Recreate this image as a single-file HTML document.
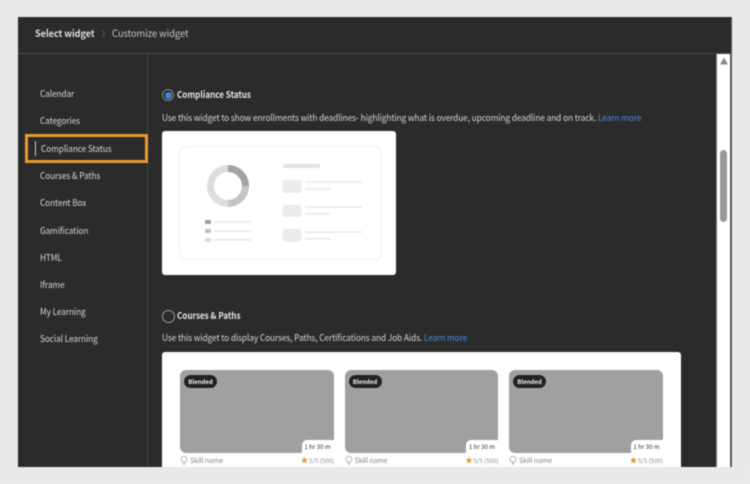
<!DOCTYPE html>
<html lang="en">
<head>
<meta charset="utf-8">
<title>Select widget</title>
<style>
html,body{margin:0;padding:0;width:750px;height:484px;overflow:hidden;background:#e9e9e9}
body{font-family:"Noto Sans CJK JP","Liberation Sans",sans-serif;position:relative}
.a{position:absolute;white-space:nowrap;line-height:1;transform-origin:0 50%}
#win{position:absolute;left:18px;top:17px;width:698px;height:450px;background:#2b2b2b}
#wrap{position:absolute;left:0;top:0;width:750px;height:484px;filter:blur(.45px)}
.nav{left:40.2px;font-size:9.2px;color:#d6d6d6;letter-spacing:-.1px;transform:scaleX(.9)}
.d{left:162px;font-size:9.2px;color:#d4d4d4;letter-spacing:-.12px;transform:scaleX(.909)}
.t{left:176.5px;font-size:9.2px;font-weight:700;color:#e2e2e2;letter-spacing:-.05px;transform:scaleX(.887)}
.lm{color:#4f88da}
.b{position:absolute;background:#ededed;border-radius:1px}
.l{position:absolute;background:#ececec;height:2px}
.img{position:absolute;top:370px;width:153.5px;height:83px;background:#a0a0a0;border-radius:6px}
.bl{position:absolute;left:4px;top:5px;width:33px;height:13px;border-radius:7px;background:#222;color:#eee;font-size:6px;font-weight:700;line-height:13px;text-align:center}
.tm{position:absolute;right:0;bottom:0;width:32px;height:13px;background:#fff;border-radius:5px 0 5px 0;color:#333;font-size:6.2px;line-height:14px;text-align:center}
.sk{top:457.8px;font-size:7.2px;color:#8a8a8a;letter-spacing:-.2px}
.rt{top:458px;font-size:6.2px;color:#8f8f8f}
.st{top:456.5px;font-size:8px;color:#e0983a}
</style>
</head>
<body>
<div id="wrap">
<div id="win"></div>
<div style="position:absolute;left:717px;top:53px;width:13px;height:414px;background:#fff"></div>
<div style="position:absolute;left:716px;top:53px;width:1px;height:414px;background:#777"></div>
<div style="position:absolute;left:730px;top:17px;width:1.5px;height:450px;background:#555"></div>
<div style="position:absolute;left:716px;top:17px;width:15px;height:36px;background:#2b2b2b"></div>
<div style="position:absolute;left:18px;top:53px;width:713px;height:1px;background:#4a4a4a"></div>
<div style="position:absolute;left:147px;top:53px;width:1px;height:414px;background:#454545"></div>

<svg style="position:absolute;left:719px;top:57px" width="10" height="8"><path d="M1 7.5L5 .5L9 7.5Z" fill="#888"/></svg>
<div style="position:absolute;left:720px;top:150px;width:7px;height:72px;background:#999;border-radius:4px"></div>

<div class="a" style="left:35.2px;top:28px;font-size:10px;font-weight:700;color:#dcdcdc;letter-spacing:-.1px;transform:scaleX(.914)">Select widget</div>
<svg style="position:absolute;left:101px;top:30px" width="5" height="7" viewBox="0 0 5 7"><path d="M1 .8L4 3.500L1 6.200" fill="none" stroke="#666" stroke-width=".8"/></svg>
<div class="a" style="left:112px;top:28px;font-size:10px;color:#c4c4c4;letter-spacing:-.1px;transform:scaleX(.945)">Customize widget</div>

<div class="a nav" style="top:89px">Calendar</div>
<div class="a nav" style="top:116px">Categories</div>
<div style="position:absolute;left:25px;top:134px;width:117px;height:23px;border:3px solid #ea9a2e"></div>
<div style="position:absolute;left:35px;top:141px;width:1px;height:15px;background:#ccc"></div>
<div class="a nav" style="top:144px;left:41px">Compliance Status</div>
<div class="a nav" style="top:171px">Courses &amp; Paths</div>
<div class="a nav" style="top:198px">Content Box</div>
<div class="a nav" style="top:225.500px">Gamification</div>
<div class="a nav" style="top:252.500px">HTML</div>
<div class="a nav" style="top:280px">Iframe</div>
<div class="a nav" style="top:307px">My Learning</div>
<div class="a nav" style="top:334px">Social Learning</div>

<div style="position:absolute;left:162px;top:89px;width:10px;height:10px;border:1px solid #888;border-radius:50%"></div>
<div style="position:absolute;left:164.500px;top:91.500px;width:7px;height:7px;background:#3d86dc;border-radius:50%"></div>
<div class="a t" style="top:89.500px">Compliance Status</div>
<div class="a d" style="top:113px">Use this widget to show enrollments with deadlines- highlighting what is overdue, upcoming deadline and on track. <span class="lm">Learn more</span></div>

<div style="position:absolute;left:162px;top:131px;width:234px;height:144px;background:#fff;border-radius:3px"></div>
<div style="position:absolute;left:179px;top:146px;width:201px;height:112px;border:1px solid #efefef;border-radius:6px"></div>
<svg style="position:absolute;left:206px;top:164px" width="44" height="44" viewBox="0 0 44 44">
<circle cx="22" cy="22" r="17.5" fill="none" stroke="#dedede" stroke-width="7"/>
<path d="M22 4.500A17.500 17.500 0 0 1 39.500 22" fill="none" stroke="#a2a2a2" stroke-width="7"/>
<path d="M39.500 22A17.500 17.500 0 0 1 22 39.500" fill="none" stroke="#c4c4c4" stroke-width="7"/>
</svg>
<div class="b" style="left:205px;top:220px;width:6px;height:4px;background:#a0a0a0"></div>
<div class="b" style="left:205px;top:229px;width:6px;height:4px;background:#c0c0c0"></div>
<div class="b" style="left:205px;top:238px;width:6px;height:4px;background:#dcdcdc"></div>
<div class="l" style="left:214px;top:221px;width:37px"></div>
<div class="l" style="left:214px;top:230px;width:37px"></div>
<div class="l" style="left:214px;top:239px;width:37px"></div>
<div class="b" style="left:283px;top:164px;width:37px;height:4px;background:#e2e2e2"></div>
<div class="b" style="left:283px;top:180px;width:18px;height:13px;border-radius:2px"></div>
<div class="b" style="left:283px;top:205px;width:18px;height:12px;border-radius:2px"></div>
<div class="b" style="left:283px;top:229px;width:18px;height:13px;border-radius:2px"></div>
<div class="l" style="left:305px;top:181px;width:57px"></div>
<div class="l" style="left:305px;top:188px;width:25px"></div>
<div class="l" style="left:305px;top:206px;width:57px"></div>
<div class="l" style="left:305px;top:213px;width:25px"></div>
<div class="l" style="left:305px;top:231px;width:57px"></div>
<div class="l" style="left:305px;top:238px;width:25px"></div>

<div style="position:absolute;left:161.500px;top:310px;width:11px;height:11px;border:1px solid #999;border-radius:50%"></div>
<div class="a t" style="top:310.500px">Courses &amp; Paths</div>
<div class="a d" style="top:333px">Use this widget to display Courses, Paths, Certifications and Job Aids. <span class="lm">Learn more</span></div>

<div style="position:absolute;left:162px;top:352px;width:519px;height:115px;background:#fff;border-radius:3px 3px 0 0"></div>

<div class="img" style="left:180px"><div class="bl">Blended</div><div class="tm">1 hr 30 m</div></div>
<div class="img" style="left:344.500px"><div class="bl">Blended</div><div class="tm">1 hr 30 m</div></div>
<div class="img" style="left:509px"><div class="bl">Blended</div><div class="tm">1 hr 30 m</div></div>

<svg style="position:absolute;left:180px;top:456px" width="8" height="9" viewBox="0 0 8 9"><path d="M2.500 6C1.500 5 1 4.300 1 3.200A3 3 0 0 1 7 3.200C7 4.300 6.500 5 5.500 6ZM3 7.500H5M3.400 8.500H4.600" fill="none" stroke="#999" stroke-width=".7"/></svg>
<svg style="position:absolute;left:344.500px;top:456px" width="8" height="9" viewBox="0 0 8 9"><path d="M2.500 6C1.500 5 1 4.300 1 3.200A3 3 0 0 1 7 3.200C7 4.300 6.500 5 5.500 6ZM3 7.500H5M3.400 8.500H4.600" fill="none" stroke="#999" stroke-width=".7"/></svg>
<svg style="position:absolute;left:509px;top:456px" width="8" height="9" viewBox="0 0 8 9"><path d="M2.500 6C1.500 5 1 4.300 1 3.200A3 3 0 0 1 7 3.200C7 4.300 6.500 5 5.500 6ZM3 7.500H5M3.400 8.500H4.600" fill="none" stroke="#999" stroke-width=".7"/></svg>

<div class="a sk" style="left:190px">Skill name</div>
<div class="a sk" style="left:354.500px">Skill name</div>
<div class="a sk" style="left:519px">Skill name</div>

<div class="a st" style="left:300.500px">★</div>
<div class="a rt" style="left:309px">5/5 (500)</div>
<div class="a st" style="left:465px">★</div>
<div class="a rt" style="left:473.500px">5/5 (500)</div>
<div class="a st" style="left:629.500px">★</div>
<div class="a rt" style="left:638px">5/5 (500)</div>

<div style="position:absolute;left:0;top:467px;width:750px;height:17px;background:#e9e9e9"></div>
</div>
</body>
</html>
